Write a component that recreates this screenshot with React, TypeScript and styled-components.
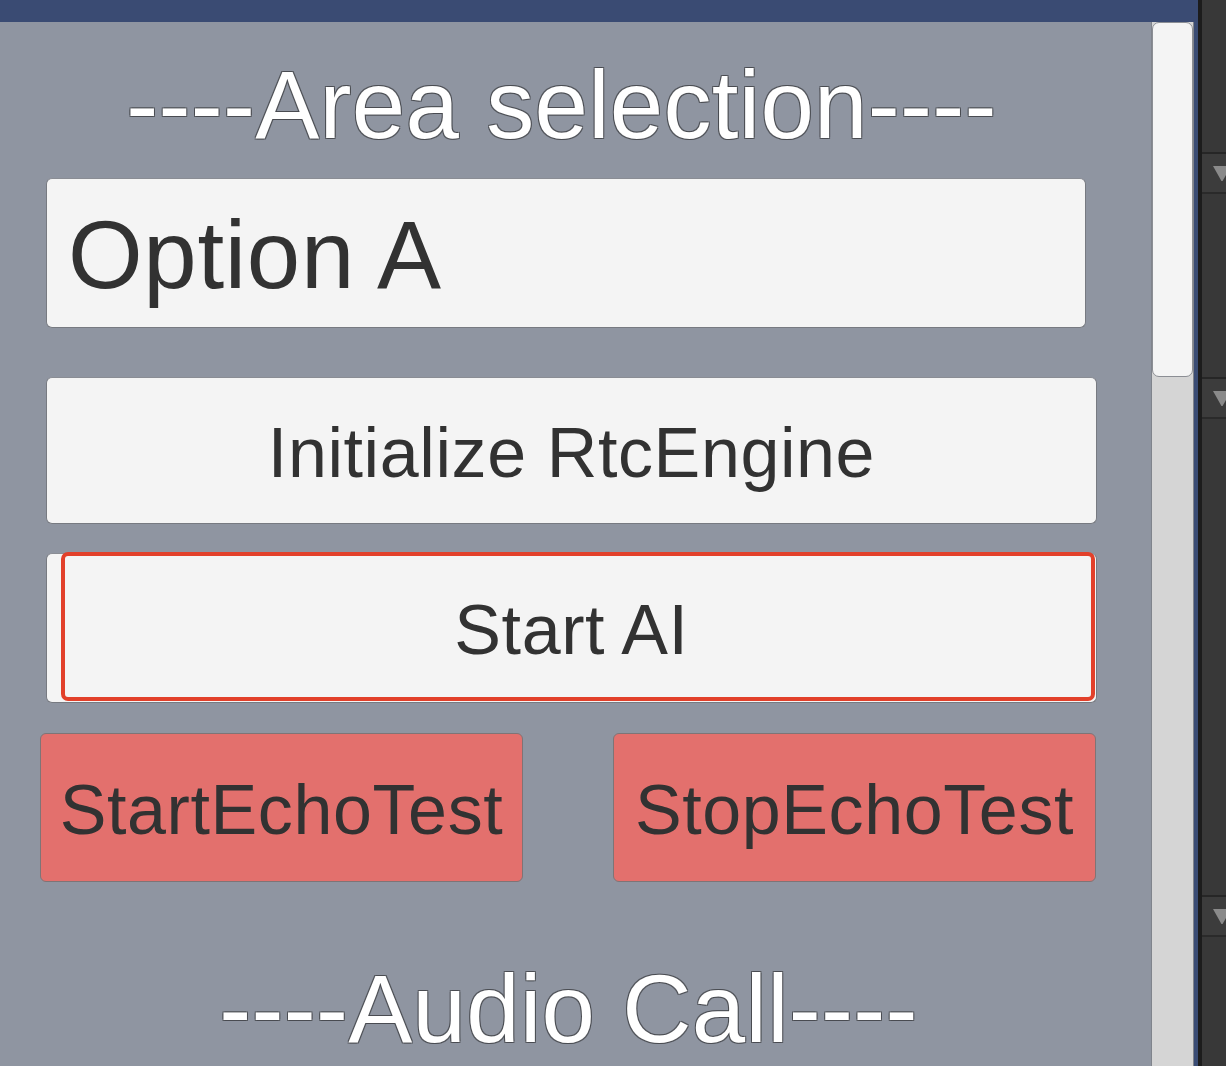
import React from "react";
import styled, { createGlobalStyle } from "styled-components";

const Global = createGlobalStyle`
  html, body { margin: 0; padding: 0; background: #383838; }
  body { font-family: "Liberation Sans", Arial, sans-serif; }
  #root { width: 1226px; height: 1066px; overflow: hidden; }
`;

const Screen = styled.div`
  display: flex;
  width: 1226px;
  height: 1066px;
  overflow: hidden;
`;

const GameView = styled.div`
  width: 1198px;
  display: flex;
  flex-direction: column;
  background: #3a4c74;
`;

const TopBar = styled.div`
  height: 22px;
  flex: none;
  background: #3a4b73;
`;

const Body = styled.div`
  flex: 1;
  display: flex;
  min-height: 0;
`;

const Panel = styled.div`
  width: 1151px;
  flex: none;
  background: #8f95a1;
  display: flex;
  flex-direction: column;
  padding-left: 40px;
  box-sizing: border-box;
  overflow: hidden;
`;

const Column = styled.div`
  width: 1057px;
  display: flex;
  flex-direction: column;
`;

const Title = styled.div<{ $top: number; $shift?: number }>`
  margin-top: ${(p) => p.$top}px;
  font-size: 96px;
  line-height: 110px;
  height: 110px;
  color: #ffffff;
  text-align: center;
  white-space: nowrap;
  letter-spacing: 0.3px;
  padding-right: ${(p) => p.$shift ?? 0}px;
  text-shadow: 1px 1px 0 rgba(70, 72, 78, 0.8), -1px -1px 0 rgba(70, 72, 78, 0.8),
    1px -1px 0 rgba(70, 72, 78, 0.8), -1px 1px 0 rgba(70, 72, 78, 0.8);
`;

const Dropdown = styled.div<{ $top: number }>`
  margin-top: ${(p) => p.$top}px;
  margin-left: 6px;
  width: 1040px;
  height: 150px;
  box-sizing: border-box;
  background: #f4f4f4;
  border: 1.5px solid #777a81;
  border-top-color: #8a8d94;
  border-radius: 6px;
  display: flex;
  align-items: center;
  padding: 4px 0 0 21px;
  font-size: 96px;
  letter-spacing: 0.7px;
  color: #323232;
  white-space: nowrap;
`;

const Button = styled.div<{ $top: number; $height: number }>`
  position: relative;
  margin-top: ${(p) => p.$top}px;
  margin-left: 6px;
  width: 1051px;
  height: ${(p) => p.$height}px;
  box-sizing: border-box;
  background: #f4f4f4;
  border: 1.5px solid #777a81;
  border-top-color: #8a8d94;
  border-radius: 6px;
  display: flex;
  align-items: center;
  justify-content: center;
  padding-top: 4px;
  font-size: 70px;
  letter-spacing: 0.6px;
  color: #323232;
  white-space: nowrap;
`;

const FocusRing = styled.div`
  position: absolute;
  left: 14px;
  top: -2px;
  right: 1px;
  bottom: 1px;
  border: 4px solid #e2402a;
  border-radius: 7px;
  pointer-events: none;
`;

const EchoRow = styled.div<{ $top: number }>`
  margin-top: ${(p) => p.$top}px;
  display: flex;
  justify-content: space-between;
  width: 1056px;
`;

const EchoButton = styled.div`
  width: 483px;
  height: 149px;
  box-sizing: border-box;
  background: #e3706d;
  border: 1.5px solid #7f7476;
  border-radius: 6px;
  display: flex;
  align-items: center;
  justify-content: center;
  padding-top: 4px;
  font-size: 70px;
  letter-spacing: 0.6px;
  color: #323232;
  white-space: nowrap;
`;

const Scrollbar = styled.div`
  width: 43px;
  flex: none;
  background: #d5d5d5;
  border-left: 1px solid #80848c;
  border-right: 1px solid #7f838b;
  box-sizing: border-box;
  display: flex;
  flex-direction: column;
`;

const Thumb = styled.div`
  height: 355px;
  background: #f4f4f4;
  border: 1px solid #8b8e94;
  border-radius: 7px;
  box-sizing: border-box;
`;

const SidePanel = styled.div`
  width: 28px;
  flex: none;
  background: #383838;
  border-left: 4px solid #1c1c1c;
  box-sizing: border-box;
  display: flex;
  flex-direction: column;
`;

const SideGap = styled.div<{ $h: number }>`
  height: ${(p) => p.$h}px;
  flex: none;
`;

const SideRow = styled.div`
  height: 42px;
  flex: none;
  box-sizing: border-box;
  background: #3c3c3c;
  border-top: 2px solid #262626;
  border-bottom: 2px solid #2a2a2a;
  display: flex;
  align-items: center;
  padding-left: 11px;
  overflow: hidden;
`;

const Arrow = () => (
  <svg width="18" height="16" viewBox="0 0 18 16" style={{ flex: "none" }}>
    <polygon points="0,1 18,1 9,17" fill="#8a8a8a" />
  </svg>
);

export default function App() {
  return (
    <>
      <Global />
      <Screen>
        <GameView>
          <TopBar />
          <Body>
            <Panel>
              <Column>
                <Title $top={28} $shift={14}>----Area selection----</Title>
                <Dropdown $top={18}>Option A</Dropdown>
                <Button $top={49} $height={147}>Initialize RtcEngine</Button>
                <Button $top={29} $height={150}>
                  Start AI
                  <FocusRing />
                </Button>
                <EchoRow $top={30}>
                  <EchoButton>StartEchoTest</EchoButton>
                  <EchoButton>StopEchoTest</EchoButton>
                </EchoRow>
                <Title $top={72} $shift={0}>----Audio Call----</Title>
              </Column>
            </Panel>
            <Scrollbar>
              <Thumb />
            </Scrollbar>
          </Body>
        </GameView>
        <SidePanel>
          <SideGap $h={152} />
          <SideRow>
            <Arrow />
          </SideRow>
          <SideGap $h={183} />
          <SideRow>
            <Arrow />
          </SideRow>
          <SideGap $h={476} />
          <SideRow>
            <Arrow />
          </SideRow>
        </SidePanel>
      </Screen>
    </>
  );
}
